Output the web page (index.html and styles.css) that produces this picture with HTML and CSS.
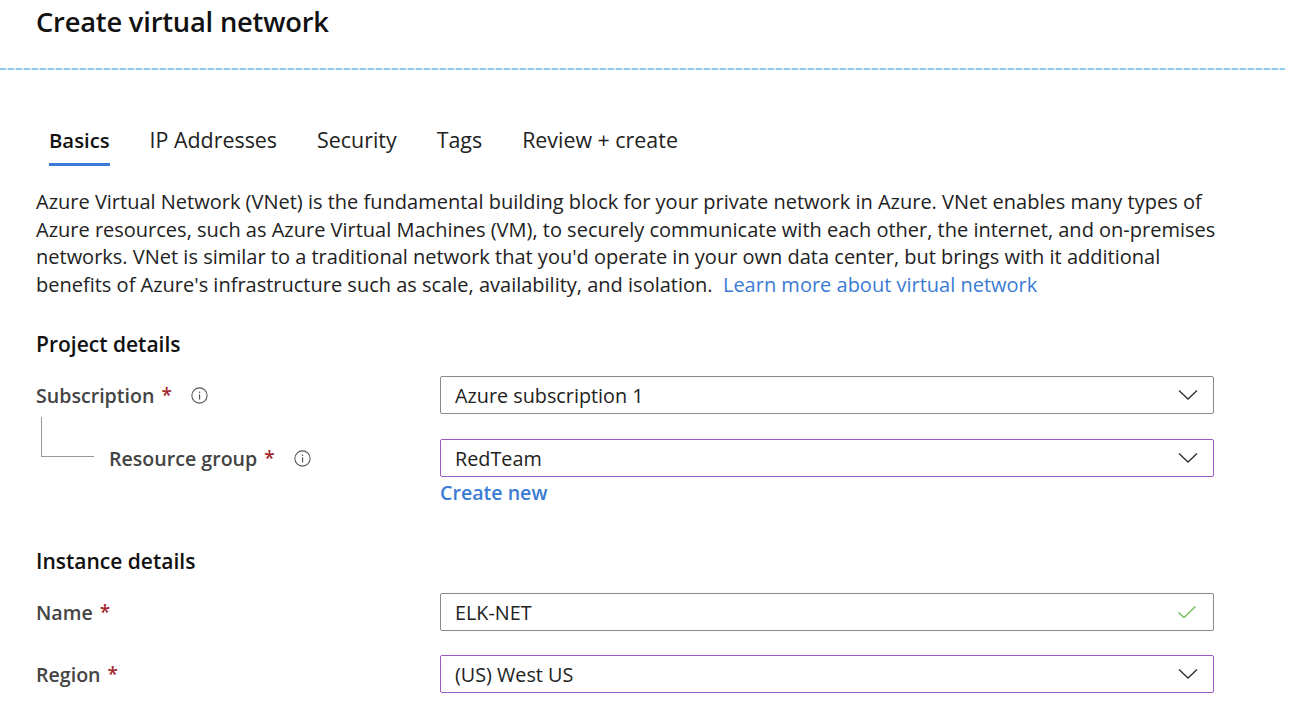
FILE: index.html
```html
<!DOCTYPE html>
<html lang="en">
<head>
<meta charset="utf-8">
<title>Create virtual network</title>
<link rel="stylesheet" href="styles.css">
</head>
<body>
<header class="header">
  <h1 class="title">Create virtual network</h1>
</header>
<div class="divider"></div>
<main class="content">
  <nav class="tabs">
    <span class="tab tab-active">Basics</span>
    <span class="tab">IP Addresses</span>
    <span class="tab">Security</span>
    <span class="tab">Tags</span>
    <span class="tab">Review + create</span>
  </nav>
  <p class="intro">Azure Virtual Network (VNet) is the fundamental building block for your private network in Azure. VNet enables many types of Azure resources, such as Azure Virtual Machines (VM), to securely communicate with each other, the internet, and on&#8209;premises networks. VNet is similar to a traditional network that you'd operate in your own data center, but brings with it additional benefits of Azure's infrastructure such as scale, availability, and isolation.&nbsp; <a class="link" href="#">Learn more about virtual network</a></p>

  <h2 class="section-title">Project details</h2>
  <div class="row">
    <div class="label-col">
      <span class="label">Subscription</span><span class="req">*</span>
      <svg class="info" viewBox="0 0 16 16" width="17" height="17"><circle cx="8" cy="8" r="7.2" fill="none" stroke="#555" stroke-width="1"/><rect x="7.5" y="6.8" width="1.1" height="5" fill="#555"/><circle cx="8.05" cy="4.9" r="0.7" fill="#555"/></svg>
    </div>
    <div class="field">
      <span class="value">Azure subscription 1</span>
      <svg class="chev" viewBox="0 0 20 12" width="20" height="12"><path d="M1 1.5 L10 10 L19 1.5" fill="none" stroke="#333" stroke-width="1.4"/></svg>
    </div>
  </div>
  <div class="row row-sub">
    <div class="label-col label-sub">
      <span class="tree"></span>
      <span class="label">Resource group</span><span class="req">*</span>
      <svg class="info" viewBox="0 0 16 16" width="17" height="17"><circle cx="8" cy="8" r="7.2" fill="none" stroke="#555" stroke-width="1"/><rect x="7.5" y="6.8" width="1.1" height="5" fill="#555"/><circle cx="8.05" cy="4.9" r="0.7" fill="#555"/></svg>
    </div>
    <div class="field-wrap">
      <div class="field field-focus">
        <span class="value">RedTeam</span>
        <svg class="chev" viewBox="0 0 20 12" width="20" height="12"><path d="M1 1.5 L10 10 L19 1.5" fill="none" stroke="#333" stroke-width="1.4"/></svg>
      </div>
      <a class="create-new" href="#">Create new</a>
    </div>
  </div>

  <h2 class="section-title section-instance">Instance details</h2>
  <div class="row row-name">
    <div class="label-col">
      <span class="label">Name</span><span class="req">*</span>
    </div>
    <div class="field">
      <span class="value">ELK-NET</span>
      <svg class="check" viewBox="0 0 20 14" width="20" height="14"><path d="M1.5 7.5 L7 12.5 L18.5 1.5" fill="none" stroke="#7bc160" stroke-width="1.6"/></svg>
    </div>
  </div>
  <div class="row row-region">
    <div class="label-col">
      <span class="label">Region</span><span class="req">*</span>
    </div>
    <div class="field field-focus">
      <span class="value">(US) West US</span>
      <svg class="chev" viewBox="0 0 20 12" width="20" height="12"><path d="M1 1.5 L10 10 L19 1.5" fill="none" stroke="#333" stroke-width="1.4"/></svg>
    </div>
  </div>
</main>
</body>
</html>
```

FILE: styles.css
```css
* { box-sizing: border-box; }
html, body { margin: 0; padding: 0; background: #fff; }
body {
  font-family: "Open Sans", "Noto Sans", "Liberation Sans", sans-serif;
  color: #1b1b1b;
  width: 1298px;
  overflow: hidden;
}
.header { padding: 4px 0 0 36px; }
.title {
  margin: 0;
  font-size: 27.3px;
  line-height: 36px;
  font-weight: 600;
  color: #111;
  letter-spacing: -0.2px;
}
.divider {
  margin-top: 28px;
  width: 1285px;
  height: 2px;
  background: repeating-linear-gradient(90deg, #8ccdf2 0 6px, #e4eef3 6px 8px);
}
.content { padding: 0 36px; }
.tabs {
  display: flex;
  gap: 40px;
  margin: 56px 0 0 13px;
  font-size: 21.4px;
  line-height: 28px;
  color: #222;
}
.tab { padding-bottom: 9px; border-bottom: 3px solid transparent; }
.tab-active { font-weight: 600; font-size: 20.3px; border-bottom-color: #3b79d8; color: #111; }
.intro {
  margin: 22px 0 0;
  font-size: 20px;
  line-height: 27.5px;
  color: #222;
  width: 1190px;
}
.link { color: #3a7bd5; text-decoration: none; }
.section-title {
  margin: 33px 0 0;
  font-size: 21px;
  line-height: 26px;
  font-weight: 600;
  color: #111;
}
.section-instance { margin-top: 40px; }
.row { display: flex; align-items: flex-start; margin-top: 19px; }
.row-sub { margin-top: 25px; }
.row-name { margin-top: 19px; }
.row-region { margin-top: 24px; }
.label-col {
  width: 404px;
  display: flex;
  align-items: center;
  height: 38px;
  font-size: 19.6px;
  font-weight: 600;
  color: #444;
  position: relative;
}
.label-sub { padding-left: 73px; }
.tree {
  position: absolute;
  left: 5px;
  top: -22px;
  width: 53px;
  height: 40px;
  border-left: 1px solid #999;
  border-bottom: 1px solid #999;
}
.req { color: #a4262c; margin-left: 7px; font-size: 19px; }
.info { margin-left: 19px; }
.field {
  width: 774px;
  height: 38px;
  border: 1.5px solid #8a8a8a;
  border-radius: 2px;
  display: flex;
  align-items: center;
  justify-content: space-between;
  padding: 0 14px 0 14px;
  font-size: 19.8px;
  color: #222;
}
.field-focus { border-color: #9b59c5; }
.field-wrap { display: flex; flex-direction: column; }
.create-new {
  color: #3a7bd5;
  font-weight: 600;
  font-size: 19.6px;
  text-decoration: none;
  line-height: 31px;
}
.chev { margin-right: 1px; }
.check { margin-right: 2px; }
```
